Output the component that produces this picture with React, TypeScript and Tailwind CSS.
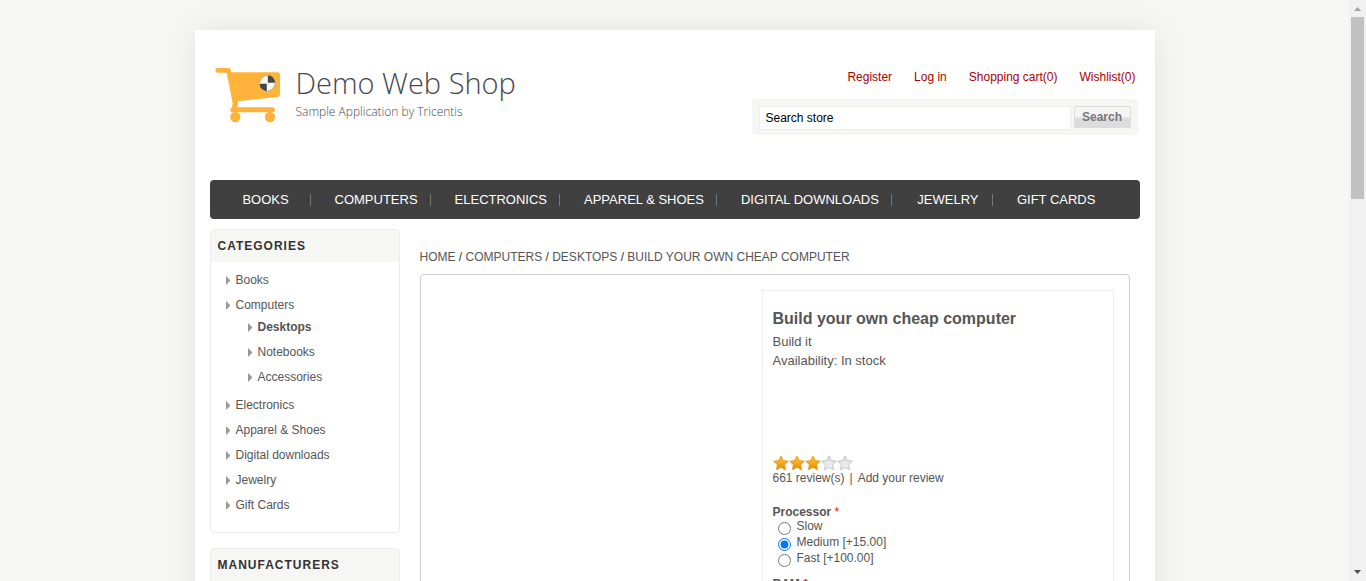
import React from 'react';

type Category = { name: string; children?: string[] };

const accountLinks = ['Register', 'Log in', 'Shopping cart(0)', 'Wishlist(0)'];

const menu = [
  'Books',
  'Computers',
  'Electronics',
  'Apparel & Shoes',
  'Digital downloads',
  'Jewelry',
  'Gift Cards',
];

const categories: Category[] = [
  { name: 'Books' },
  { name: 'Computers', children: ['Desktops', 'Notebooks', 'Accessories'] },
  { name: 'Electronics' },
  { name: 'Apparel & Shoes' },
  { name: 'Digital downloads' },
  { name: 'Jewelry' },
  { name: 'Gift Cards' },
];

const processors = [
  { id: 'slow', label: 'Slow' },
  { id: 'medium', label: 'Medium [+15.00]' },
  { id: 'fast', label: 'Fast [+100.00]' },
];

function CartLogo() {
  return (
    <svg viewBox="0 0 240 210" className="h-[70px] w-20 shrink-0" aria-hidden="true">
      <g fill="#ffb33b">
        <path d="M23 24H57Q61 24 62 29L64 37H203Q210 37 210 44V103Q210 110 203 111L84 124L83 142H188Q195 142 195 149.500Q195 157 188 157H68Q61 157 61 150Q61 145 66 141L68 130L50 38H23Q16 38 16 31Q16 24 23 24Z" />
        <circle cx="76" cy="171" r="15.500" />
        <circle cx="180" cy="171" r="15.500" />
      </g>
      <circle cx="172" cy="70" r="23.500" fill="#fffaf0" />
      <path d="M173.500 68V46A23 23 0 0 1 195.500 68Z" fill="#45484f" />
      <path d="M170.500 71V93.500A23 23 0 0 1 148.500 71Z" fill="#45484f" />
      <path d="M149 68A23.500 23.500 0 0 1 170.500 46.500M195 71A23.500 23.500 0 0 1 173.500 93" fill="none" stroke="#8a7c5c" strokeWidth="1.500" />
    </svg>
  );
}

function Arrow() {
  return (
    <svg viewBox="0 0 4 9" className="h-[9px] w-1 shrink-0" aria-hidden="true">
      <path d="M0 0L4 4V5L0 9Z" fill="#999" />
    </svg>
  );
}

function Star({ index, filled }: { index: number; filled: boolean }) {
  const id = `star-${index}`;
  return (
    <svg viewBox="0 0 16 16" className="size-4" aria-hidden="true">
      <defs>
        <linearGradient id={id} x1="0" y1="0" x2="0" y2="1">
          <stop offset="0" stopColor={filled ? '#ffc83a' : '#dcdcdc'} />
          <stop offset="1" stopColor={filled ? '#e98a00' : '#f4f4f4'} />
        </linearGradient>
      </defs>
      <path
        d="M8 1L10.200 5.600L15.300 6.200L11.600 9.700L12.500 14.700L8 12.300L3.500 14.700L4.400 9.700L0.700 6.200L5.800 5.600Z"
        fill={`url(#${id})`}
        stroke={filled ? '#dd9210' : '#b9b9b9'}
        strokeWidth="0.800"
        strokeLinejoin="round"
      />
    </svg>
  );
}

function BlockTitle({ children }: { children: React.ReactNode }) {
  return (
    <h2 className="bg-[#f6f6f4] px-[7px] text-[12px] leading-8 font-bold tracking-[1px] text-[#333] uppercase">
      {children}
    </h2>
  );
}

function Header() {
  return (
    <header className="flex h-[150px] items-start justify-between pt-[30px]">
      <a href="#" className="flex items-start">
        <CartLogo />
        <span className="flex flex-col pl-[6px] font-['Open_Sans',sans-serif] font-light whitespace-nowrap">
          <span className="pt-[3px] text-[29px] leading-[40px] text-[#45484f]">Demo Web Shop</span>
          <span className="pt-px text-[12px] leading-4 text-[#45484f]">Sample Application by Tricentis</span>
        </span>
      </a>
      <div className="mr-[2px] flex w-[386px] flex-col gap-[14px] pt-[9px]">
        <ul className="flex justify-end gap-[22px] pr-[2px] text-[12px] leading-4 whitespace-nowrap text-[#a00]">
          {accountLinks.map((link) => (
            <li key={link}>
              <a href="#">{link}</a>
            </li>
          ))}
        </ul>
        <form className="flex items-start gap-[3px] rounded-[4px] bg-[#f6f6f4] p-[7px] pb-[5px]" onSubmit={(e) => e.preventDefault()}>
          <input
            type="text"
            aria-label="Search store"
            defaultValue="Search store"
            className="h-6 min-w-0 flex-1 border border-[#ececec] bg-white px-[6px] text-[12px] text-black outline-none"
          />
          <button
            type="submit"
            className="h-[22px] w-[57px] rounded-[2px] border border-[#ddd] bg-linear-to-b from-[#f5f5f5] from-45% to-[#dcdcdc] to-60% text-[12px] leading-5 font-bold text-[#777]"
          >
            Search
          </button>
        </form>
      </div>
    </header>
  );
}

function MainMenu() {
  return (
    <nav className="rounded-[4px] bg-[#404040]">
      <ul className="flex h-[39px] items-center text-[13px] whitespace-nowrap text-white uppercase">
        {menu.map((item, i) => (
          <li key={item} className="flex items-center">
            {i > 0 && <span className="h-3 w-px bg-[#777]" />}
            <a href="#" className="mr-[12px] ml-[24px] min-w-[64px] text-center leading-5">
              {item}
            </a>
          </li>
        ))}
      </ul>
    </nav>
  );
}

function CategoryLink({ name, active }: { name: string; active?: boolean }) {
  return (
    <a href="#" className={`flex items-center gap-[6px] leading-[19px] ${active ? 'font-bold' : ''}`}>
      <Arrow />
      {name}
    </a>
  );
}

function Sidebar() {
  return (
    <aside className="flex w-[190px] shrink-0 flex-col gap-[15px]">
      <section className="overflow-hidden rounded-[4px] border border-[#ececec]">
        <BlockTitle>Categories</BlockTitle>
        <ul className="px-[15px] pt-[6px] pb-[14px] text-[12px] text-[#555]">
          {categories.map(({ name, children }) => (
            <li key={name} className="py-[3px]">
              <CategoryLink name={name} />
              {children && (
                <ul className="pl-[22px]">
                  {children.map((child) => (
                    <li key={child} className="py-[3px]">
                      <CategoryLink name={child} active={child === 'Desktops'} />
                    </li>
                  ))}
                </ul>
              )}
            </li>
          ))}
        </ul>
      </section>
      <section className="overflow-hidden rounded-[4px] border border-[#ececec]">
        <BlockTitle>Manufacturers</BlockTitle>
        <ul className="px-[15px] pt-[6px] pb-[14px] text-[12px] text-[#555]">
          <li className="py-[3px]">
            <CategoryLink name="Tricentis" />
          </li>
        </ul>
      </section>
    </aside>
  );
}

function Breadcrumb() {
  return (
    <nav aria-label="Breadcrumb" className="text-[12px] leading-4 text-[#333] uppercase">
      <a href="#" className="text-[#555]">Home</a> / <a href="#" className="text-[#555]">Computers</a> /{' '}
      <a href="#" className="text-[#555]">Desktops</a> / <span className="text-[#555]">Build your own cheap computer</span>
    </nav>
  );
}

function ProductOverview() {
  return (
    <div className="min-h-[600px] w-[352px] border border-[#eee] px-[10px] pt-[17px] text-[12px] text-[#555]">
      <h1 className="mb-[2px] text-[16px] leading-[22px] font-bold">Build your own cheap computer</h1>
      <p className="text-[13px] leading-[19px]">Build it</p>
      <p className="text-[13px] leading-[19px]">Availability: In stock</p>
      <div className="mt-[85px] flex" role="img" aria-label="3 of 5 stars">
        {[0, 1, 2, 3, 4].map((i) => (
          <Star key={i} index={i} filled={i < 3} />
        ))}
      </div>
      <p className="leading-[14px]">
        <a href="#">661 review(s)</a>
        <span className="px-[5px]">|</span>
        <a href="#">Add your review</a>
      </p>
      <fieldset className="mt-5">
        <legend className="leading-[14px] font-bold">
          Processor <span className="font-normal text-[#f00]">*</span>
        </legend>
        <ul className="pl-[5px]">
          {processors.map(({ id, label }) => (
            <li key={id} className="flex h-4 items-start gap-[6px]">
              <input
                id={id}
                type="radio"
                name="processor"
                defaultChecked={id === 'medium'}
                className="mt-[3px] size-[13px] shrink-0"
              />
              <label htmlFor={id} className="leading-[14px]">
                {label}
              </label>
            </li>
          ))}
        </ul>
      </fieldset>
      <p className="mt-[10px] leading-[14px] font-bold">
        RAM <span className="text-[#f00]">*</span>
      </p>
    </div>
  );
}

function Scrollbar() {
  return (
    <div className="flex w-[17px] shrink-0 flex-col items-center bg-[#f1f1f1]" aria-hidden="true">
      <svg viewBox="0 0 17 17" className="size-[17px] shrink-0">
        <path d="M5 11L8.500 7L12 11Z" fill="#a3a3a3" />
      </svg>
      <div className="h-[182px] w-[13px] bg-[#c1c1c1]" />
      <div className="flex-1" />
      <svg viewBox="0 0 17 17" className="size-[17px] shrink-0">
        <path d="M5 6L8.500 10L12 6Z" fill="#505050" />
      </svg>
    </div>
  );
}

export default function App() {
  return (
    <div className="flex h-screen overflow-hidden bg-[#f6f6f4] font-['Liberation_Sans',Arial,sans-serif]">
      <div className="flex-1 overflow-hidden pt-[30px]">
        <div className="mx-auto max-w-[960px] bg-white px-[15px] pb-8 shadow-[0_0_30px_rgba(0,0,0,0.08)]">
          <Header />
          <MainMenu />
          <div className="mt-[10px] flex items-start gap-5">
            <Sidebar />
            <main className="mr-[10px] flex-1 pt-5">
              <Breadcrumb />
              <div className="mt-[9px] flex justify-end rounded-[4px] border border-[#ccc] p-[15px]">
                <ProductOverview />
              </div>
            </main>
          </div>
        </div>
      </div>
      <Scrollbar />
    </div>
  );
}
